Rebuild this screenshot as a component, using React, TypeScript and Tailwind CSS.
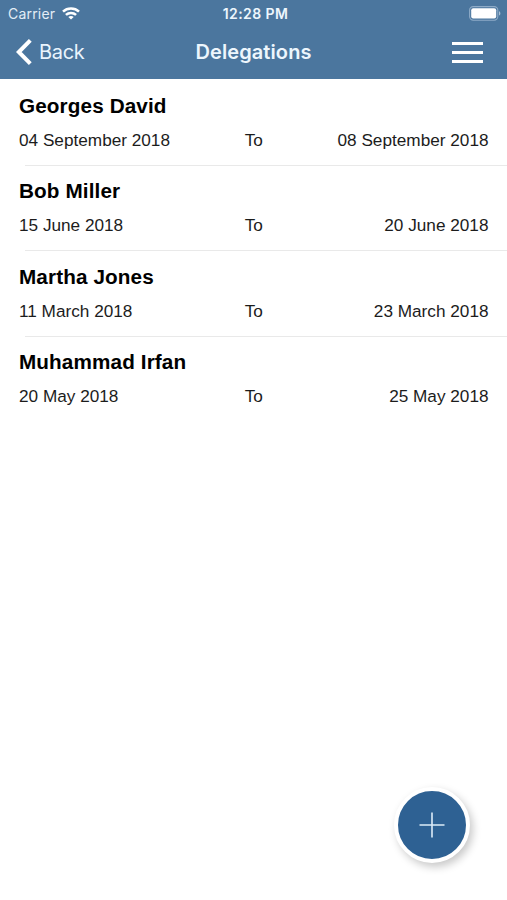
interface Delegation {
  name: string;
  from: string;
  to: string;
}

const delegations: Delegation[] = [
  { name: 'Georges David', from: '04 September 2018', to: '08 September 2018' },
  { name: 'Bob Miller', from: '15 June 2018', to: '20 June 2018' },
  { name: 'Martha Jones', from: '11 March 2018', to: '23 March 2018' },
  { name: 'Muhammad Irfan', from: '20 May 2018', to: '25 May 2018' },
];

function WifiIcon() {
  return (
    <svg width="18" height="13" viewBox="0 0 18 13" fill="none" stroke="currentColor" strokeWidth="2.5">
      <path d="M1 4.7C5.4.5 12.6.5 17 4.7" />
      <path d="M3.9 7.9c2.9-2.7 7.3-2.7 10.2 0" />
      <path d="M9 12.6 6.3 9.9c1.5-1.3 3.9-1.3 5.4 0Z" fill="currentColor" stroke="none" />
    </svg>
  );
}

function BatteryIcon() {
  return (
    <svg width="32" height="15" viewBox="0 0 32 15" fill="none">
      <rect x=".6" y=".6" width="28.2" height="13.6" rx="3.6" stroke="#8eabc7" strokeWidth="1.1" />
      <rect x="2.2" y="2.2" width="25" height="10.4" rx="2" fill="#fff" />
      <path d="M30 5.2c1.8.6 1.8 3.8 0 4.4Z" fill="#a9bfd4" />
    </svg>
  );
}

function StatusBar() {
  return (
    <div className="grid h-[27px] grid-cols-[1fr_auto_1fr] items-center pl-[8px] pr-[6px] leading-none">
      <div className="flex items-center gap-[7px] text-[#e3edf6]">
        <span className="text-[14px] tracking-[0.2px]">Carrier</span>
        <span className="text-white">
          <WifiIcon />
        </span>
      </div>
      <span className="pl-[2px] text-[14px] font-semibold tracking-[0.4px] text-[#edf6fd]">12:28 PM</span>
      <div className="flex justify-end">
        <BatteryIcon />
      </div>
    </div>
  );
}

function NavBar() {
  return (
    <div className="grid h-[50px] grid-cols-[1fr_auto_1fr] items-center px-[24px]">
      <button className="-ml-[8px] flex items-center gap-[7px] text-[#e9f4fd]">
        <svg width="16" height="26" viewBox="0 0 16 26" fill="none" stroke="#fff" strokeWidth="4">
          <path d="M14.3 1.4 2.8 13l11.5 11.6" />
        </svg>
        <span className="text-[20px] leading-none tracking-[-0.3px]">Back</span>
      </button>
      <h1 className="text-[20px] font-semibold leading-none tracking-[0.1px] text-[#edf6fd]">Delegations</h1>
      <button className="flex flex-col gap-[6px] justify-self-end" aria-label="Menu">
        <span className="h-[3px] w-[31px] bg-white" />
        <span className="h-[3px] w-[31px] bg-white" />
        <span className="h-[3px] w-[31px] bg-white" />
      </button>
    </div>
  );
}

function DelegationRow({ item }: { item: Delegation }) {
  return (
    <li className="group flex h-[85.5px] flex-col whitespace-nowrap pt-[13.8px]">
      <h2 className="px-[19px] text-[20.7px] font-bold leading-[24px] tracking-[0.12px] text-black">{item.name}</h2>
      <div className="mt-[12px] grid grid-cols-[1fr_auto_1fr] pl-[19px] pr-[18.5px] text-[17.2px] leading-[20px] text-[#1c1c1c]">
        <span>{item.from}</span>
        <span>To</span>
        <span className="text-right">{item.to}</span>
      </div>
      <div className="ml-[25px] mt-auto h-px bg-[#e9e9e9] group-last:hidden" />
    </li>
  );
}

export default function App() {
  return (
    <div className="relative h-[900px] w-[507px] overflow-hidden bg-white font-['Liberation_Sans',Arial,sans-serif]">
      <header className="h-[79px] bg-[#4b769e] font-['Inter',sans-serif]">
        <StatusBar />
        <NavBar />
      </header>

      <ul className="pt-[1px]">
        {delegations.map((item) => (
          <DelegationRow key={item.name} item={item} />
        ))}
      </ul>

      <button
        aria-label="Add delegation"
        className="absolute left-[394px] top-[787px] flex h-[76px] w-[76px] items-center justify-center rounded-full border-4 border-white bg-[#2e6193] shadow-[3px_4px_8px_rgba(0,0,0,0.22)]"
      >
        <svg width="26" height="26" viewBox="0 0 26 26" stroke="#dcecf8" strokeWidth="1.6">
          <path d="M13 .5v25M.5 13h25" />
        </svg>
      </button>
    </div>
  );
}
